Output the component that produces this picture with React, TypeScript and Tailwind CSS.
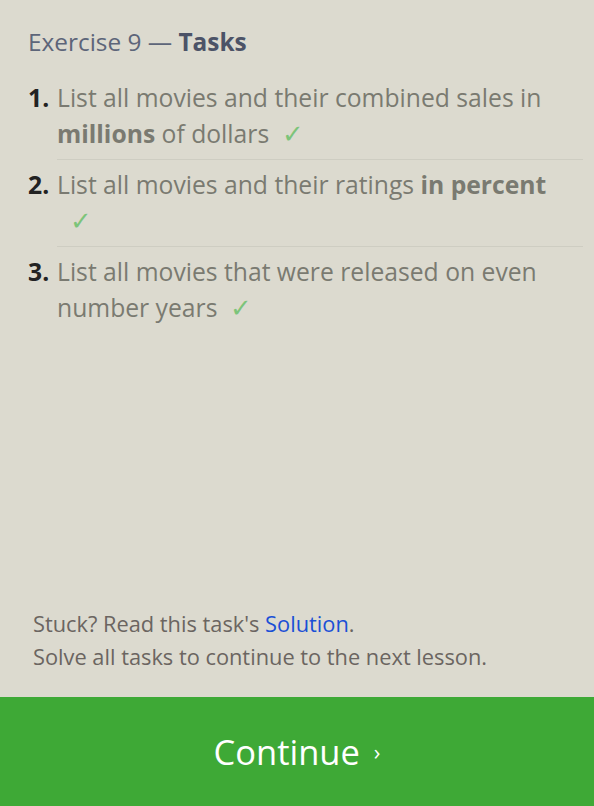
const tasks = [
  { parts: [["List all movies and their combined sales in ", false], ["millions", true], [" of dollars", false]] as [string, boolean][] },
  { parts: [["List all movies and their ratings ", false], ["in percent", true]] as [string, boolean][] },
  { parts: [["List all movies that were released on even number years", false]] as [string, boolean][] },
];

function Check() {
  return <span className="ml-[13px] inline-block text-[26px] leading-none text-[#7cc47a]">✓</span>;
}

export default function App() {
  return (
    <div className="flex h-[806px] w-[594px] flex-col bg-[#dcdacf] font-['Open_Sans',sans-serif]">
      <div className="flex-1 pl-[28px] pr-[11px] pt-[24px]">
        <h2 className="text-[24.4px] leading-[36px] text-[#5d6579]">
          Exercise 9 — <span className="font-bold text-[#4c5367]">Tasks</span>
        </h2>
        <ol className="mt-[20px]">
          {tasks.map((t, i) => (
            <li key={i} className="flex text-[24.7px] leading-[36px]">
              <span className="w-[29px] shrink-0 font-bold text-[#222]">{i + 1}.</span>
              <div
                className={
                  "flex-1 pb-[7px] text-[#7a7a71] " + (i < tasks.length - 1 ? "mb-[7px] border-b border-[#cecdc2]" : "")
                }
              >
                <div className="pr-[24px]">
                  {t.parts.map(([s, b], j) => (
                    <span key={j} className={b ? "font-bold" : ""}>
                      {s}
                    </span>
                  ))}
                  <Check />
                </div>
              </div>
            </li>
          ))}
        </ol>
      </div>
      <div className="px-[33px] pb-[24px] text-[21.8px] leading-[33px] text-[#6b6561]">
        <p>
          Stuck? Read this task's <a className="text-[#1a4fd6]">Solution</a>.
        </p>
        <p>Solve all tasks to continue to the next lesson.</p>
      </div>
      <button className="flex h-[109px] items-center justify-center bg-[#3ea936] text-[34.5px] text-white">
        Continue<span className="ml-[14px] text-[22px]">›</span>
      </button>
    </div>
  );
}
